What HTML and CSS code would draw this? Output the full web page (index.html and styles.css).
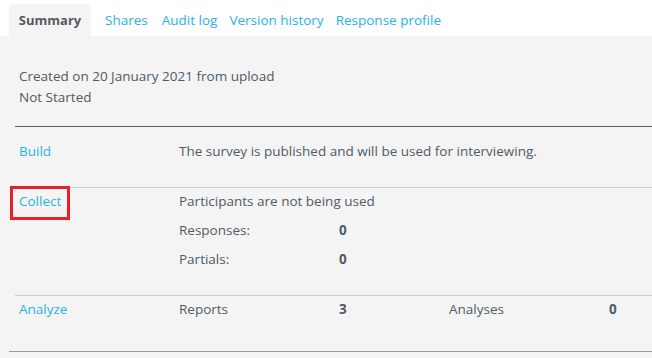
FILE: index.html
```html
<!DOCTYPE html>
<html>
<head>
<meta charset="utf-8">
<link rel="stylesheet" href="styles.css">
</head>
<body>
<nav class="tabs">
  <span class="tab active">Summary</span>
  <a class="tab t-shares">Shares</a>
  <a class="tab t-audit">Audit log</a>
  <a class="tab t-version">Version history</a>
  <a class="tab t-profile">Response profile</a>
</nav>
<main class="content">
  <div class="info">
    <div class="line">Created on 20 January 2021 from upload</div>
    <div class="line">Not Started</div>
  </div>
  <section class="row row-build">
    <a class="label">Build</a>
    <div class="wide">The survey is published and will be used for interviewing.</div>
  </section>
  <section class="row row-collect">
    <div class="label-cell"><a class="label">Collect</a><span class="highlight"></span></div>
    <div class="wide">Participants are not being used</div>
    <div class="c2">Responses:</div>
    <div class="c3 num">0</div>
    <div class="c2">Partials:</div>
    <div class="c3 num">0</div>
  </section>
  <section class="row row-analyze">
    <a class="label">Analyze</a>
    <div class="c2">Reports</div>
    <div class="c3 num">3</div>
    <div class="c4">Analyses</div>
    <div class="c5 num">0</div>
  </section>
  <div class="bottom-rule"></div>
</main>
</body>
</html>
```
FILE: styles.css
```css
html, body {
  margin: 0;
  padding: 0;
}
body {
  background: #f4f4f4;
  font-family: "Open Sans", "Liberation Sans", sans-serif;
  font-size: 13.5px;
  color: #4f5b66;
  width: 652px;
  height: 358px;
  overflow: hidden;
}
.tabs {
  display: flex;
  align-items: flex-end;
  height: 36px;
  background: #ffffff;
  padding-left: 9px;
  box-sizing: border-box;
}
.tab {
  height: 32px;
  line-height: 32px;
  color: #29b3e6;
  white-space: nowrap;
}
.tab.active {
  background: #f4f4f4;
  border-radius: 4px 4px 0 0;
  width: 82px;
  text-align: center;
  font-size: 13px;
  font-weight: 700;
  color: #555a60;
}
.t-shares { margin-left: 14px; }
.t-audit { margin-left: 14px; }
.t-version { margin-left: 12px; }
.t-profile { margin-left: 12px; }

.content {
  padding-top: 30px;
}
.info {
  padding-left: 19px;
  padding-bottom: 18px;
  line-height: 21px;
}
.row {
  margin-left: 15px;
  padding-left: 4px;
  display: grid;
  grid-template-columns: 160px 160px 110px 160px 1fr;
  grid-auto-rows: 29px;
  align-items: start;
  line-height: 27px;
  border-top: 1px solid #cccccc;
}
.row-build {
  border-top-color: #4d6770;
  padding-top: 11px;
  padding-bottom: 20px;
}
.row-collect {
  padding-top: 0;
  padding-bottom: 20px;
}
.row-analyze {
  padding-top: 0;
  padding-bottom: 26px;
}
.label {
  color: #29b3e6;
  grid-column: 1;
}
.label-cell {
  grid-column: 1;
  grid-row: 1;
  position: relative;
}
.highlight {
  position: absolute;
  left: -9px;
  top: -2px;
  width: 54px;
  height: 28px;
  border: 3px solid #e8202a;
}
.wide { grid-column: 2 / -1; }
.c2 { grid-column: 2; }
.c3 { grid-column: 3; }
.c4 { grid-column: 4; }
.c5 { grid-column: 5; }
.num { font-weight: 700; }
.bottom-rule {
  margin-left: 9px;
  border-top: 1px solid #999999;
}
```
